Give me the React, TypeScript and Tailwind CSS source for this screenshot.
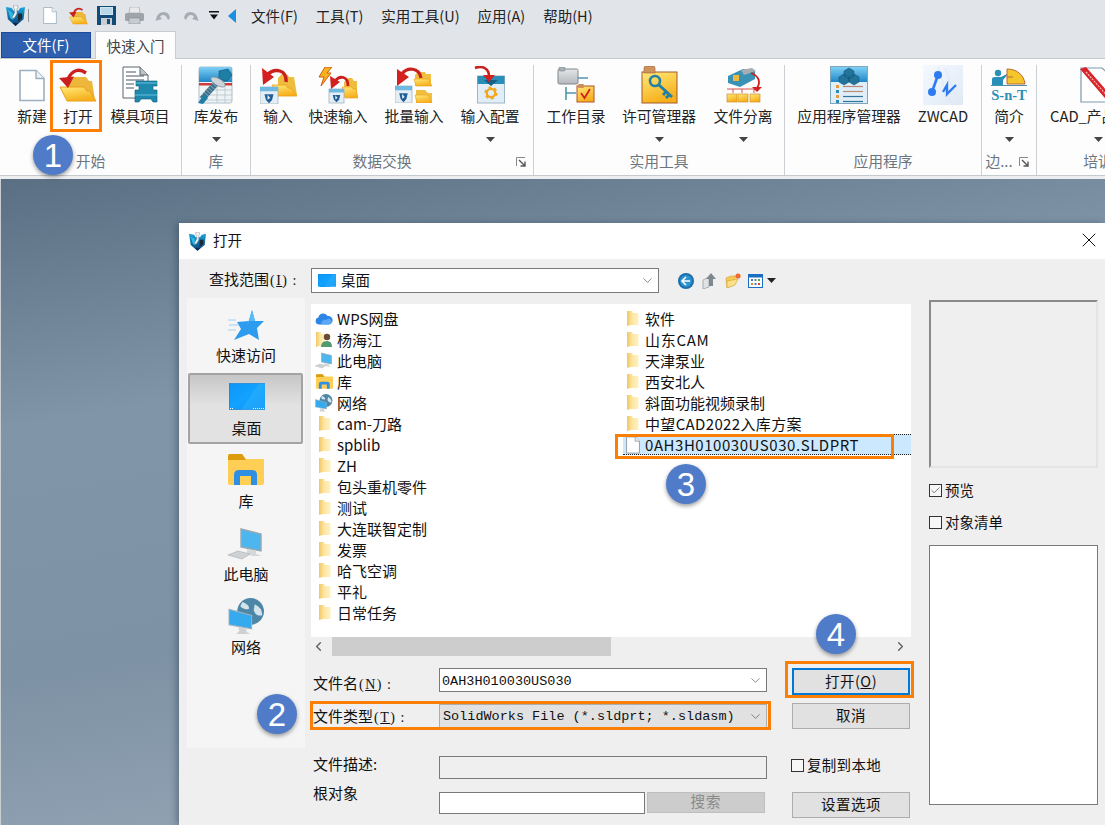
import React from "react";
import { ChevronDown, ChevronLeft, ChevronRight, Check, X } from "lucide-react";

const Defs = () => (
  <svg className="absolute w-0 h-0" aria-hidden="true">
    <defs>
      <linearGradient id="gF" x1="0" y1="0" x2="0.4" y2="1"><stop offset="0" stopColor="#ffe97a" /><stop offset="1" stopColor="#f7b01c" /></linearGradient>
      <linearGradient id="gS" x1="0" y1="0" x2="1" y2="0"><stop offset="0" stopColor="#f2c564" /><stop offset="0.45" stopColor="#fde6a3" /><stop offset="1" stopColor="#fff1c4" /></linearGradient>
      <linearGradient id="gB" x1="0" y1="0" x2="1" y2="1"><stop offset="0" stopColor="#0d96f5" /><stop offset="0.5" stopColor="#12a2ff" /><stop offset="1" stopColor="#0a8cf0" /></linearGradient>
      <linearGradient id="gL" x1="0" y1="0" x2="0" y2="1"><stop offset="0" stopColor="#7fd0f5" /><stop offset="1" stopColor="#1f86c6" /></linearGradient>
      <linearGradient id="gShield" x1="0" y1="0" x2="0" y2="1"><stop offset="0" stopColor="#1aa5da" /><stop offset="1" stopColor="#0b3e74" /></linearGradient>
      <linearGradient id="gGrey" x1="0" y1="0" x2="0" y2="1"><stop offset="0" stopColor="#e4e6e8" /><stop offset="1" stopColor="#b4b8bc" /></linearGradient>
      <linearGradient id="gZ" x1="0" y1="0" x2="1" y2="1"><stop offset="0" stopColor="#f4f9ff" /><stop offset="1" stopColor="#dfe9f5" /></linearGradient>
    </defs>
  </svg>
);

const Logo = ({ s = 20 }: { s?: number }) => (
  <svg width={s} height={s + 2} viewBox="0 0 20 22">
    <path d="M0 2 L6 3 L8 6 L13 6 L15 3 L20 2 L18.5 15 L10 22 L2 15z" fill="url(#gShield)" />
    <path d="M2 5 L7 8 L7.5 16 L4.5 13.5z" fill="#2fb7e6" />
    <path d="M12.5 9 H17 V14 L12.5 17.5z" fill="#1a2a36" />
    <path d="M8 0 h4 l.7 3 l-1.2 1.2 v5 l-3 5 l-2.2 -1.2 l2.7 -5 v-4 l-1.2 -1z" fill="#eef1f3" stroke="#5b6670" strokeWidth=".4" />
    <path d="M7 19 L10 22 L13 19z" fill="#0a2a4c" />
  </svg>
);

const Doc = ({ w = 14, h = 17, stroke = "#9db0bf" }: { w?: number; h?: number; stroke?: string }) => (
  <svg width={w} height={h} viewBox="0 0 26 32">
    <path d="M1 1 H17 L25 9 V31 H1z" fill="#fff" stroke={stroke} strokeWidth="1.6" />
    <path d="M17 1 V9 H25" fill="#eef2f5" stroke={stroke} strokeWidth="1.4" />
  </svg>
);

const OpenFolder = ({ w = 38, h = 36 }: { w?: number; h?: number }) => (
  <svg width={w} height={h} viewBox="0 0 38 36">
    <path d="M8 15 L13 10 H27 L30 14 H33 L36 33 H10z" fill="#ecb73a" />
    <path d="M1 20 H25 L28 24 H31 L37 34 H8z" fill="url(#gF)" stroke="#ea9f18" strokeWidth="1" />
    <path d="M27 6 C20 1 13 3 9 12" fill="none" stroke="#c9201e" strokeWidth="3.4" />
    <path d="M0 11 L15 9.5 L9 21z" fill="#c9201e" />
  </svg>
);

const Win = ({ x, y, w = 18, h = 17 }: { x: number; y: number; w?: number; h?: number }) => (
  <g>
    <rect x={x} y={y} width={w} height={h} fill="#e6eef5" stroke="#9fb3c4" strokeWidth=".8" />
    <rect x={x} y={y} width={w} height={h * 0.25} fill="#6db9e3" />
    <path d={`M${x + w * 0.25} ${y + h * 0.42} h${w * 0.5} l-${w * 0.08} ${h * 0.35} l-${w * 0.17} ${h * 0.18} l-${w * 0.17} -${h * 0.18}z`} fill="#1f5f96" />
    <path d={`M${x + w * 0.42} ${y + h * 0.45} l${w * 0.15} ${h * 0.2} l-${w * 0.15} ${h * 0.1}z`} fill="#e8f0f6" />
  </g>
);

const Import = () => (
  <svg width="37" height="37" viewBox="0 0 37 37">
    <path d="M18 11 L22 7 H27 L29 10 H34 L37 28 H18z" fill="#efbd3e" />
    <path d="M12 18 H26 L28 21 H31 L37 29 H17z" fill="url(#gF)" stroke="#ea9f18" strokeWidth=".8" />
    <Win x={0} y={20} />
    <path d="M26 15 C27 3 15 0 7 8" fill="none" stroke="#c9201e" strokeWidth="3.4" />
    <path d="M2 1 L3 18 L14 10z" fill="#d4201f" />
  </svg>
);

const Bolt = ({ x = 0, y = 0 }: { x?: number; y?: number }) => (
  <path transform={`translate(${x} ${y})`} d="M7 0 H14 L9 6 L13 6 L3 19 L6 10 L1 10z" fill="#f7b21d" stroke="#d65a12" strokeWidth="1" />
);

const FastImport = () => (
  <svg width="40" height="37" viewBox="0 0 40 37">
    <Bolt x={0} y={0} />
    <path d="M26 15 L30 11 H34 L36 14 H39 V30 H26z" fill="#efbd3e" />
    <path d="M24 20 H34 L35 22 H38 L40 31 H27z" fill="url(#gF)" stroke="#ea9f18" strokeWidth=".6" />
    <Win x={11} y={22} w={15} h={14} />
    <path d="M30 19 C30 9 22 8 17 14" fill="none" stroke="#c9201e" strokeWidth="2.8" />
    <path d="M12 9 L13 22 L22 15z" fill="#d4201f" />
  </svg>
);

const BatchImport = () => (
  <svg width="38" height="36" viewBox="0 0 38 36">
    <path d="M20 8 L23 5 H30 L31 7 H36 V19 H20z" fill="#f0bf42" />
    <path d="M19 12 H33 L37 19 H21z" fill="url(#gF)" stroke="#ea9f18" strokeWidth=".6" />
    <path d="M21 23 H30 L33 26 H37 V36 H21z" fill="#f0bf42" />
    <path d="M20 28 H33 L37 36 H22z" fill="url(#gF)" stroke="#ea9f18" strokeWidth=".6" />
    <Win x={0} y={19} w={17} h={17} />
    <path d="M26 11 C24 0 12 0 7 7" fill="none" stroke="#c9201e" strokeWidth="3.2" />
    <path d="M2 2 L2 19 L14 10z" fill="#d4201f" />
  </svg>
);

const Gear = ({ cx, cy, r }: { cx: number; cy: number; r: number }) => (
  <g>
    <circle cx={cx} cy={cy} r={r} fill="none" stroke="#f2a71c" strokeWidth={r * 0.55} />
    <circle cx={cx} cy={cy} r={r * 1.35} fill="none" stroke="#f2a71c" strokeWidth={r * 0.45} strokeDasharray={`${r * 0.7} ${r * 0.7}`} />
  </g>
);

const ImportConfig = () => (
  <svg width="32" height="38" viewBox="0 0 32 38">
    <rect x="3.5" y="10" width="27" height="27" fill="#e2eef7" stroke="#9fb6c6" />
    <rect x="3.5" y="10" width="27" height="8" fill="#2a8fb8" />
    <path d="M10 14 H24 L17 20z" fill="#175f85" />
    <Gear cx={17} cy={27} r={4.2} />
    <path d="M1 2 C9 -1 15 3 15 10" fill="none" stroke="#c9201e" strokeWidth="2.6" />
    <path d="M9 9 H21 L15 16z" fill="#d4201f" />
  </svg>
);

const WorkDir = () => (
  <svg width="38" height="36" viewBox="0 0 38 36">
    <rect x="1" y="2" width="20" height="15" rx="1.5" fill="url(#gGrey)" stroke="#7d8790" />
    <rect x="2" y="0" width="6" height="4" rx="1" fill="#a9b0b6" stroke="#7d8790" strokeWidth=".6" />
    <path d="M21 11 H31" stroke="#4f94ad" strokeWidth="1.5" />
    <path d="M9 20 V33 M9 26 H19" stroke="#4f94ad" strokeWidth="1.6" />
    <rect x="20" y="19" width="17" height="16" fill="url(#gF)" stroke="#b0542a" />
    <rect x="21" y="17" width="6" height="4" rx="1" fill="#cf8f59" />
    <path d="M24 26 L27.5 31 L33 22" fill="none" stroke="#d21f1f" strokeWidth="1.8" />
  </svg>
);

const KeyFolder = () => (
  <svg width="37" height="38" viewBox="0 0 37 38">
    <rect x="1" y="6" width="35" height="31" fill="url(#gF)" stroke="#a35a30" />
    <path d="M3 7 V2 Q3 0 5 0 H12 Q14 0 14 2 V7z" fill="#cf935d" stroke="#a35a30" strokeWidth=".6" />
    <circle cx="14" cy="15" r="5" fill="none" stroke="#2380a5" strokeWidth="2.6" />
    <path d="M18 19 L31 31 M25 26 L22 29 M28 29 L25 32" stroke="#2380a5" strokeWidth="3" fill="none" />
  </svg>
);

const FileSplit = () => (
  <svg width="37" height="36" viewBox="0 0 37 36">
    <path d="M3 9 L18 2 L30 4 V12 L15 20 L3 16z" fill="#3a93b5" />
    <path d="M16 3 L27 1 L31 4 L19 8z" fill="#a6adb3" />
    <rect x="8" y="8" width="6" height="6" fill="#f0b93b" />
    <path d="M2 22 H30 M8 22 V26 M17 22 V26 M29 22 V26" stroke="#d65050" strokeWidth="1" fill="none" />
    <rect x="2" y="27" width="10" height="8" fill="url(#gF)" stroke="#c8861e" strokeWidth=".6" />
    <rect x="13" y="27" width="10" height="8" fill="url(#gF)" stroke="#c8861e" strokeWidth=".6" />
    <rect x="25" y="27" width="10" height="8" fill="url(#gF)" stroke="#c8861e" strokeWidth=".6" />
    <path d="M26 6 C34 9 36 15 32 21" fill="none" stroke="#c9201e" strokeWidth="1.8" />
    <path d="M27 20 H37 L32 25z" fill="#d4201f" />
  </svg>
);

const AppManager = () => (
  <svg width="38" height="38" viewBox="0 0 38 38">
    <rect x=".5" y=".5" width="37" height="37" fill="#dfeef8" stroke="#7ea6bc" />
    <rect x="1" y="1" width="36" height="15" fill="url(#gL)" />
    <path d="M9 11 L14 8 L19 11 V16 L14 19 L9 16z M19 11 L24 8 L29 11 V16 L24 19 L19 16z M14 5 L19 2 L24 5 V10 L19 13 L14 10z" fill="#22749b" stroke="#0e4f73" strokeWidth=".5" />
    {[19, 24, 29, 34].map((y, i) => (
      <g key={y}>
        <rect x="6" y={y} width="3" height="3" fill={i % 2 ? "#2b8ab8" : "#e89a3a"} />
        <path d={`M13 ${y + 1.5} H33`} stroke={i < 2 ? "#b98a7a" : "#35739a"} strokeWidth="1.2" />
      </g>
    ))}
  </svg>
);

const Zw = () => (
  <svg width="40" height="40" viewBox="0 0 40 40">
    <rect width="40" height="40" rx="1" fill="url(#gZ)" />
    <path d="M22 3 C26 15 32 28 36 38 M15 2 C20 18 24 30 28 38" stroke="#e1e8f2" strokeWidth="1" fill="none" />
    <path d="M15 10 L9 27" stroke="#2f7cf0" strokeWidth="2.6" />
    <circle cx="15" cy="10" r="4" fill="#2f7cf0" />
    <circle cx="9" cy="27" r="4" fill="#2f7cf0" />
    <path d="M20 27 L24 20 V29 L33 20" fill="none" stroke="#2f7cf0" strokeWidth="2.4" />
  </svg>
);

const Snt = () => (
  <svg width="36" height="34" viewBox="0 0 36 34">
    <circle cx="7" cy="5" r="3.2" fill="#2a8fb8" />
    <path d="M1 17 V11 Q1 9 4 9 H10 L18 5 L12 12 V17z" fill="#2a8fb8" />
    <path d="M16 16 V1 C26 1 33 7 34 16z" fill="#f5c52c" stroke="#b86a3a" />
    <path d="M16 9 L22 9" stroke="#b86a3a" />
    <path d="M0 17.5 H36" stroke="#4b8fab" strokeWidth="1" />
    <text x="18" y="32" textAnchor="middle" fontFamily="Liberation Serif, serif" fontWeight="700" fontSize="14.5" fill="#2a8fb8">S-n-T</text>
  </svg>
);

const Premium = () => (
  <svg width="36" height="36" viewBox="0 0 36 36">
    <path d="M1 1 H22 L32 10 V35 H1z" fill="#fff" stroke="#7d9aae" strokeWidth="1.2" />
    <path d="M0 2 L6 0 L34 32 V36 H29z" fill="#d8232a" />
    <path d="M6 5 L30 32" stroke="#f7b7b7" strokeWidth="1.2" strokeDasharray="2 1" />
  </svg>
);

const Mold = () => (
  <svg width="36" height="38" viewBox="0 0 36 38">
    <path d="M1 1 H18 L26 9 V32 H1z" fill="#fff" stroke="#59656e" />
    <path d="M18 1 V9 H26" fill="#bcc4ca" stroke="#59656e" />
    {[6, 10, 14, 18, 22].map((y, i) => <path key={y} d={`M4 ${y} H${i < 1 ? 14 : i < 3 ? 22 : 12}`} stroke="#59656e" strokeWidth="1.1" />)}
    <path d="M14 15 H35 V20 H31 V24 H35 V36 H31 L29 33 H19 L17 36 H13 V24 H17 V20 H14z" fill="#1f89ad" stroke="#0f5d7d" strokeWidth=".6" />
    <path d="M14 17 H35 M13 29 H35" stroke="#63c1dd" strokeWidth="1" />
  </svg>
);

const LibPub = () => (
  <svg width="38" height="40" viewBox="0 0 38 40">
    <rect x="2" y="2" width="33" height="36" rx="2" fill="#eef3f6" stroke="#aebfca" />
    <rect x="2" y="2" width="33" height="15" fill="url(#gL)" />
    <rect x="2" y="18" width="33" height="2.5" fill="#cf3b3b" />
    <path d="M8 25 H35 M8 30 H35 M8 35 H35 M20 21 V38 M28 21 V38" stroke="#b6c3cb" strokeWidth=".8" />
    <path d="M5 34 L22 15" stroke="#3b6f88" strokeWidth="6" />
    <path d="M5 34 L22 15" stroke="#7ea1b2" strokeWidth="6" strokeDasharray="1 2" />
    <path d="M22 6 L31 4 L35 10 L30 16 L22 14z" fill="#1e7ea5" stroke="#0f5472" strokeWidth=".6" />
    <ellipse cx="21" cy="17" rx="8" ry="3.5" transform="rotate(30 21 17)" fill="#ccd4d9" stroke="#7e8b93" strokeWidth=".7" />
    <path d="M1 38 L7 29 L11 33 L6 39z" fill="#1e7ea5" />
  </svg>
);

const SmallFolder = () => (
  <svg width="13" height="17" viewBox="0 0 13 17">
    <path d="M1 1 H6.5 V3 H12.5 V15 H5 L1 16z" fill="url(#gS)" />
  </svg>
);

const Cloud = () => (
  <svg width="18" height="13" viewBox="0 0 18 13">
    <path d="M4 12.5 A3.6 3.6 0 0 1 3.4 5.4 A5 5 0 0 1 12.6 4 A4.2 4.2 0 0 1 14 12.5z" fill="#2c86e8" />
    <path d="M6 12.5 Q7 7 11 8 Q14 5 16 8 Q18 11 14 12.5z" fill="#5aa8f5" />
  </svg>
);

const Person = () => (
  <svg width="18" height="17" viewBox="0 0 18 17">
    <path d="M1 1 H6 V3 H10 V15 H4 L1 16z" fill="url(#gS)" />
    <circle cx="12" cy="6" r="3.2" fill="#6b4b33" />
    <path d="M6 16 Q6 10 12 10 Q17 10 17 16z" fill="#4f9a6f" />
  </svg>
);

const Pc = ({ s = 18 }: { s?: number }) => (
  <svg width={s} height={s} viewBox="0 0 36 36">
    <path d="M13 2 L33 7 V24 L13 20z" fill="#4db6ef" stroke="#9aa7b0" strokeWidth="1.4" />
    <path d="M19 22 L28 24 V27 L34 29 L24 29 L19 26z" fill="#d4d8db" />
    <path d="M0 28 L10 24 L22 27 L14 32z" fill="#cfd2d4" stroke="#a9adb1" strokeWidth=".6" />
  </svg>
);

const Lib = ({ w = 17, h = 15 }: { w?: number; h?: number }) => (
  <svg width={w} height={h} viewBox="0 0 36 31">
    <path d="M0 2 Q0 0 2 0 H14 L18 5 H36 V29 Q36 31 34 31 H2 Q0 31 0 29z" fill="#ffcf55" />
    <path d="M0 2 Q0 0 2 0 H14 L18 6 H0z" fill="#dd9c0e" />
    <path d="M6 31 V21 Q6 16 11 16 H24 Q29 16 29 21 V31 H23 V22 H12 V31z" fill="#2f8fe3" />
  </svg>
);

const Net = ({ s = 18 }: { s?: number }) => (
  <svg width={s} height={s} viewBox="0 0 36 36">
    <circle cx="22" cy="13" r="13" fill="#4c87a8" />
    <path d="M14 4 Q22 7 20 11 Q14 11 12 8z M26 6 Q34 10 33 17 Q27 18 25 12z" fill="#d5e4ea" />
    <path d="M1 11 L23 17 V30 L1 26z" fill="#35aaef" stroke="#9fb1bc" strokeWidth="1" />
    <path d="M10 28 L18 30 V33 L22 35 H8 L11 32z" fill="#cdd1d4" />
  </svg>
);

const Star = () => (
  <svg width="36" height="32" viewBox="0 0 36 32">
    <path d="M24 0 L27 11 L36 11 L29 18 L31 30 L21 24 L6 30 L13 19 L9 12 L21 11z" fill="#2d9cef" />
    <path d="M24 0 L27 11 L21 11 L19 16z" fill="#57bbf7" />
    <path d="M0 10 H8 M1 15 H11 M0 20 H8" stroke="#9bd2f6" strokeWidth="1" />
  </svg>
);

const Desk = ({ w = 36, h = 26 }: { w?: number; h?: number }) => (
  <svg width={w} height={h} viewBox="0 0 36 26">
    <rect width="36" height="26" fill="url(#gB)" stroke="#0d78cf" strokeWidth=".6" />
    <path d="M12 26 L30 0 H36 V26z" fill="#2bb0ff" opacity=".55" />
    <path d="M1 25 H4 M24 25 H35" stroke="#fff" strokeWidth="1" strokeDasharray="1 1" />
  </svg>
);

const Caret = ({ color = "#444" }: { color?: string }) => (
  <svg width="9" height="5" viewBox="0 0 9 5"><path d="M0 0 H9 L4.5 5z" fill={color} /></svg>
);

const Launcher = () => (
  <svg width="10" height="10" viewBox="0 0 10 10">
    <path d="M.5 9 V.5 H9" fill="none" stroke="#888" />
    <path d="M3 3 L9 9 M9 4.5 V9 H4.5" fill="none" stroke="#555" strokeWidth="1.4" />
  </svg>
);

const RBtn = ({ w, label, icon, caret }: { w: string; label: string; icon: React.ReactNode; caret?: boolean }) => (
  <div className={`flex flex-col items-center shrink-0 ${w}`}>
    <div className="h-[40px] flex items-center justify-center">{icon}</div>
    <div className="h-[22px] leading-[22px] whitespace-nowrap text-[14.8px] text-[#222]">{label}</div>
    {caret && <div className="mt-[10px] h-[5px] flex"><Caret /></div>}
  </div>
);

const Group = ({ w, pl, label, launcher, children }: { w: string; pl: string; label: string; launcher?: boolean; children: React.ReactNode }) => (
  <div className={`relative shrink-0 flex flex-col border-r border-[#ccd0d4] ${w}`}>
    <div className={`h-[87px] flex ${pl}`}>{children}</div>
    <div className={`h-[22px] leading-[18px] text-center text-[14.8px] text-[#6c7680] whitespace-nowrap ${launcher ? "pr-[20px]" : ""}`}>{label}</div>
    {launcher && <div className="absolute right-[7px] bottom-[8px] flex"><Launcher /></div>}
  </div>
);

const leftFiles: [string, React.ReactNode][] = [
  ["WPS网盘", <Cloud />],
  ["杨海江", <Person />],
  ["此电脑", <Pc />],
  ["库", <Lib />],
  ["网络", <Net />],
  ["cam-刀路", <SmallFolder />],
  ["spblib", <SmallFolder />],
  ["ZH", <SmallFolder />],
  ["包头重机零件", <SmallFolder />],
  ["测试", <SmallFolder />],
  ["大连联智定制", <SmallFolder />],
  ["发票", <SmallFolder />],
  ["哈飞空调", <SmallFolder />],
  ["平礼", <SmallFolder />],
  ["日常任务", <SmallFolder />],
];
const rightFiles: [string, string][] = [
  ["软件", ""],
  ["山东CAM", "tracking-[0.7px]"],
  ["天津泵业", ""],
  ["西安北人", ""],
  ["斜面功能视频录制", ""],
  ["中望CAD2022入库方案", "tracking-[0.35px]"],
];

const Box = ({ checked }: { checked?: boolean }) => (
  <span className="w-[13px] h-[13px] border border-[#333] bg-[#f7f7f7] flex items-center justify-center shrink-0">
    {checked && <Check size={11} strokeWidth={1.8} color="#666" />}
  </span>
);

const Btn = ({ w, h, children, cls = "" }: { w: string; h: string; children: React.ReactNode; cls?: string }) => (
  <div className={`${w} ${h} shrink-0 flex items-center justify-center pb-[2px] bg-[#e1e1e1] text-[14.5px] tracking-[0.5px] text-[#111] ${cls || "border border-[#adadad]"}`}>{children}</div>
);

const Num = ({ n, cls }: { n: string; cls: string }) => (
  <div className={`absolute w-[40px] h-[40px] rounded-full bg-[#4f7bc8] text-white flex items-center justify-center text-[33px] leading-none font-['Liberation_Sans',sans-serif] shadow-[0_2px_4px_rgba(0,0,0,0.4)] ${cls}`}>{n}</div>
);

const Orange = ({ cls }: { cls: string }) => <div className={`absolute border-[3px] border-[#fb7e05] ${cls}`} />;

const Label = ({ w, children }: { w: string; children: React.ReactNode }) => (
  <div className={`${w} pl-[2px] text-[15px] leading-[20px] text-[#111] whitespace-nowrap shrink-0`}>{children}</div>
);

const K = ({ c }: { c: string }) => (
  <span className="font-['Liberation_Serif',serif] text-[14px] tracking-[1.5px] ml-[1px]">(<u>{c}</u>)<span className="ml-[4px]">:</span></span>
);

export default function App() {
  return (
    <div className="relative w-[1105px] h-[825px] overflow-hidden flex flex-col bg-[#e1e5e9] font-['Noto_Sans_CJK_SC','Noto_Sans',sans-serif]">
      <Defs />
      {/* quick access + menu */}
      <div className="h-[31px] shrink-0 flex items-center pl-[6px]">
        <Logo s={19} />
        <div className="ml-[3px] w-px h-[13px] bg-[#8f969c]" />
        <div className="ml-[14px] flex"><Doc /></div>
        <div className="ml-[12px] flex"><OpenFolder w={19} h={18} /></div>
        <svg className="ml-[9px]" width="19" height="19" viewBox="0 0 19 19">
          <path d="M0 0 H19 V19 H0z" fill="#124a78" />
          <rect x="3" y="1" width="13" height="8" fill="#cfe6f4" />
          <path d="M4 3 H15 M4 5 H15 M4 7 H15" stroke="#8fb9d4" strokeWidth=".7" />
          <rect x="4" y="12" width="11" height="7" fill="#c9cdd1" />
          <rect x="10" y="13" width="3" height="5" fill="#124a78" />
        </svg>
        <svg className="ml-[9px]" width="19" height="17" viewBox="0 0 19 17">
          <path d="M5 0 H14 L15 6 H4z" fill="#e8eaec" stroke="#9aa0a5" strokeWidth=".6" />
          <rect x="0" y="6" width="19" height="8" rx="1.5" fill="#9ea4a9" />
          <rect x="4" y="11" width="11" height="6" fill="#c7cbcf" stroke="#858b90" strokeWidth=".6" />
        </svg>
        <svg className="ml-[11px]" width="16" height="10" viewBox="0 0 16 10">
          <path d="M1 9 Q2 1 9 1 Q14 1 15 7 L13 9 Q11 4 8 4 Q6 4 5 6 L7 8 L0 10z" fill="#a6acb1" />
        </svg>
        <svg className="ml-[12px]" width="16" height="10" viewBox="0 0 16 10">
          <path d="M15 9 Q14 1 7 1 Q2 1 1 7 L3 9 Q5 4 8 4 Q10 4 11 6 L9 8 L16 10z" fill="#a6acb1" />
        </svg>
        <svg className="ml-[10px]" width="10" height="9" viewBox="0 0 10 9">
          <path d="M0 0 H10 V1.5 H0z M1 3.5 H9 L5 8.5z" fill="#111" />
        </svg>
        <svg className="ml-[9px]" width="8" height="14" viewBox="0 0 8 14"><path d="M8 0 V14 L0 7z" fill="#1a8fe0" /></svg>
        <div className="ml-[15px] flex gap-[18px] text-[14.5px] text-[#222]">
          {["文件(F)", "工具(T)", "实用工具(U)", "应用(A)", "帮助(H)"].map((m) => <span key={m} className="whitespace-nowrap leading-[20px]">{m}</span>)}
        </div>
      </div>
      {/* tabs */}
      <div className="h-[27px] shrink-0 flex items-end pl-[1px]">
        <div className="w-[90px] h-[26px] bg-[#2f60ad] border border-[#1c4a9c] text-white text-[14.5px] flex items-center justify-center">文件(F)</div>
        <div className="relative z-10 ml-[4px] -mb-px w-[81px] h-[28px] bg-[#fdfdfd] border border-b-0 border-[#c9cdd1] text-[#444] text-[14.5px] flex items-center justify-center">快速入门</div>
      </div>
      {/* ribbon */}
      <div className="h-[118px] shrink-0 bg-[#fdfdfd] border-y border-[#c6cacf] pt-[6px] flex overflow-hidden">
        <Group w="w-[182px]" pl="pl-[9px]" label="开始">
          <RBtn w="w-[46px]" label="新建" icon={<Doc w={26} h={33} />} />
          <RBtn w="w-[46px]" label="打开" icon={<OpenFolder />} />
          <RBtn w="w-[78px]" label="模具项目" icon={<Mold />} />
        </Group>
        <Group w="w-[69px]" pl="pl-0" label="库">
          <RBtn w="w-[68px]" label="库发布" icon={<LibPub />} caret />
        </Group>
        <Group w="w-[283px]" pl="pl-[2px]" label="数据交换" launcher>
          <RBtn w="w-[50px]" label="输入" icon={<Import />} />
          <RBtn w="w-[70px]" label="快速输入" icon={<FastImport />} />
          <RBtn w="w-[82px]" label="批量输入" icon={<BatchImport />} />
          <RBtn w="w-[70px]" label="输入配置" icon={<ImportConfig />} caret />
        </Group>
        <Group w="w-[251px]" pl="pl-0" label="实用工具">
          <RBtn w="w-[84px]" label="工作目录" icon={<WorkDir />} />
          <RBtn w="w-[82px]" label="许可管理器" icon={<KeyFolder />} caret />
          <RBtn w="w-[86px]" label="文件分离" icon={<FileSplit />} caret />
        </Group>
        <Group w="w-[197px]" pl="pl-0" label="应用程序">
          <RBtn w="w-[128px]" label="应用程序管理器" icon={<AppManager />} />
          <RBtn w="w-[60px]" label="ZWCAD" icon={<Zw />} />
        </Group>
        <Group w="w-[55px]" pl="pl-0" label="边..." launcher>
          <RBtn w="w-[54px]" label="简介" icon={<Snt />} caret />
        </Group>
        <div className="w-[122px] shrink-0 flex flex-col">
          <div className="h-[87px] flex">
            <RBtn w="w-[122px]" label="CAD_产品介绍" icon={<Premium />} caret />
          </div>
          <div className="h-[22px] leading-[18px] text-center text-[14.8px] text-[#6c7680] whitespace-nowrap">培训</div>
        </div>
      </div>
      <div className="h-[3px] shrink-0 bg-[#eceef0]" />
      {/* workspace */}
      <div className="flex-1 border-l border-[#c9ced3] pl-[178px] pt-[44px] bg-[linear-gradient(170deg,#5a6f83_0%,#8095a7_30%,#7e92a5_60%,#9fafbd_100%)]">
        {/* dialog window */}
        <div className="w-[926px] h-[602px] bg-[#efefef] flex flex-col shadow-[-3px_0_6px_rgba(50,70,90,0.45)]">
          <div className="h-[36px] shrink-0 bg-white flex items-center pl-[10px] pr-[4px]">
            <Logo s={17} />
            <span className="ml-[7px] -mt-[3px] text-[14.5px] text-[#111]">打开</span>
            <X className="ml-auto -mt-[2px]" size={24} strokeWidth={1} color="#111" />
          </div>
          <div className="mt-[9px] h-[25px] shrink-0 flex items-center pl-[30px]">
            <div className="w-[102px] pb-[2px] text-[15px] leading-[20px] text-[#111] whitespace-nowrap">查找范围<K c="I" /></div>
            <div className="w-[348px] h-[25px] border border-[#7a7a7a] bg-white flex items-center pl-[6px] pr-[3px]">
              <Desk w={18} h={13} />
              <span className="ml-[5px] pb-[2px] text-[14.5px] text-[#111]">桌面</span>
              <ChevronDown className="ml-auto" size={15} strokeWidth={1.1} color="#555" />
            </div>
            <svg className="ml-[19px]" width="16" height="16" viewBox="0 0 16 16">
              <circle cx="8" cy="8" r="8" fill="#1d6fa8" />
              <circle cx="8" cy="8" r="6" fill="#2f93cf" />
              <path d="M8 4 L4 8 L8 12 M4 8 H12" stroke="#fff" strokeWidth="1.6" fill="none" />
            </svg>
            <svg className="ml-[8px]" width="14" height="16" viewBox="0 0 14 16">
              <path d="M1 7 L7 4 V14 L1 16z" fill="#dfe3e6" stroke="#8f979d" strokeWidth=".7" />
              <path d="M9 0 L14 6 H11 V13 H7 V6 H4z" fill="#7e8890" />
            </svg>
            <svg className="ml-[9px]" width="16" height="15" viewBox="0 0 16 15">
              <path d="M1 5 L6 3 H10 V11 L2 15z" fill="#f5c95a" stroke="#d59e2a" strokeWidth=".6" />
              <path d="M2 8 L13 6 L10 12 L2 15z" fill="#fde08a" stroke="#d59e2a" strokeWidth=".6" />
              <circle cx="13" cy="3" r="2.6" fill="#ef6a2e" />
            </svg>
            <svg className="ml-[7px]" width="15" height="14" viewBox="0 0 15 14">
              <rect x=".5" y=".5" width="14" height="13" fill="#fff" stroke="#1b6fc2" />
              <rect x="1" y="1" width="13" height="2.5" fill="#1b6fc2" />
              <path d="M3 5h2v2H3z" fill="#4a7fc0" /><path d="M6.5 5h2v2h-2z" fill="#6a7f8c" /><path d="M10 5h2v2h-2z" fill="#4fa24f" />
              <path d="M3 9h2v2H3z" fill="#e08a2c" /><path d="M6.5 9h2v2h-2z" fill="#3f7fc9" /><path d="M10 9h2v2h-2z" fill="#d04a3a" />
            </svg>
            <div className="ml-[4px] flex"><Caret color="#222" /></div>
          </div>
          <div className="mt-[5px] flex">
            {/* places */}
            <div className="ml-[8px] w-[118px] h-[450px] shrink-0 bg-[#f5f5f5] flex flex-col items-center pt-[12px] text-[15px] text-[#111]">
              <Star />
              <div className="mt-[3px] leading-[20px]">快速访问</div>
              <div className="mt-[8px] ml-[-2px] pl-[3px] w-[115px] h-[71px] shrink-0 border-2 border-[#a3a3a3] rounded-[2px] bg-[linear-gradient(#c6c6c6,#e2e2e2_45%,#e2e2e2)] flex flex-col items-center pt-[8px]">
                <Desk w={36} h={27} />
                <div className="mt-[8px] leading-[20px]">桌面</div>
              </div>
              <div className="mt-[10px] flex"><Lib w={36} h={31} /></div>
              <div className="mt-[6px] leading-[20px]">库</div>
              <div className="mt-[16px] flex"><Pc s={36} /></div>
              <div className="mt-[1px] leading-[20px]">此电脑</div>
              <div className="mt-[14px] flex"><Net s={37} /></div>
              <div className="mt-[2px] leading-[20px]">网络</div>
            </div>
            {/* centre */}
            <div className="ml-[6px] mt-[6px] w-[600px] shrink-0">
              <div className="h-[333px] bg-white flex pt-[4px] text-[15px] text-[#111]">
                <div className="w-[312px] shrink-0">
                  {leftFiles.map(([t, ic]) => (
                    <div key={t} className="h-[21px] flex items-center">
                      <div className="w-[26px] shrink-0 flex justify-center">{ic}</div>
                      <span className="leading-[21px] whitespace-nowrap">{t}</span>
                    </div>
                  ))}
                </div>
                <div className="flex-1">
                  {rightFiles.map(([t, c]) => (
                    <div key={t} className="h-[21px] flex items-center pl-[2px]">
                      <div className="w-[20px] shrink-0 pl-[1px] flex"><SmallFolder /></div>
                      <span className={`leading-[21px] whitespace-nowrap ${c}`}>{t}</span>
                    </div>
                  ))}
                  <div className="h-[21px] flex items-center pl-[3px] bg-[#cce8ff] border-y border-dotted border-[#222]">
                    <div className="w-[19px] shrink-0 flex"><Doc w={14} h={18} stroke="#8d949a" /></div>
                    <span className="leading-[19px] whitespace-nowrap tracking-[0.55px]">0AH3H010030US030.SLDPRT</span>
                  </div>
                </div>
              </div>
              <div className="h-[19px] flex items-center">
                <div className="w-[21px] shrink-0 flex"><ChevronLeft size={15} strokeWidth={2.2} color="#606060" /></div>
                <div className="h-full w-[279px] bg-[#cdcdcd]" />
                <ChevronRight className="ml-auto mr-[3px]" size={15} strokeWidth={2.2} color="#606060" />
              </div>
              <div className="mt-[12px] h-[36px] flex">
                <Label w="w-[128px] pt-[5px]">文件名<K c="N" /></Label>
                <div className="w-[328px] h-[24px] bg-white border border-[#7a7a7a] flex items-center pl-[2px] pr-[3px] font-['Liberation_Mono',monospace] text-[13.5px] text-[#111]">
                  <span className="translate-y-[2px]">0AH3H010030US030</span>
                  <ChevronDown className="ml-auto" size={15} strokeWidth={1.1} color="#555" />
                </div>
                <Btn w="ml-[25px] w-[118px]" h="h-[27px]" cls="border-2 border-[#0078d7]">打开(<u>O</u>)</Btn>
              </div>
              <div className="h-[52px] flex">
                <Label w="w-[128px] pt-[2px]">文件类型<K c="T" /></Label>
                <div className="w-[328px] h-[24px] bg-[#e1e1e1] border border-[#adadad] flex items-center pl-[3px] pr-[3px] font-['Liberation_Mono',monospace] text-[13.5px] text-[#111]">
                  <span className="translate-y-px">SolidWorks File (*.sldprt; *.sldasm)</span>
                  <ChevronDown className="ml-auto" size={15} strokeWidth={1.1} color="#555" />
                </div>
                <Btn w="ml-[25px] -mt-px w-[118px]" h="h-[26px]">取消</Btn>
              </div>
              <div className="h-[36px] flex">
                <Label w="w-[128px] -mt-[2px]">文件描述:</Label>
                <div className="w-[328px] h-[23px] bg-[#efefef] border border-[#7a7a7a]" />
                <div className="ml-[24px] mt-[3px] h-[13px] flex items-center">
                  <Box />
                  <span className="ml-[3px] -translate-y-px text-[14.5px] tracking-[0.3px] text-[#111] whitespace-nowrap leading-[20px]">复制到本地</span>
                </div>
              </div>
              <div className="flex">
                <Label w="w-[128px] -mt-[9px]">根对象</Label>
                <div className="w-[206px] h-[22px] bg-white border border-[#7a7a7a]" />
                <div className="ml-[2px] w-[118px] h-[21px] pb-[3px] bg-[#cccccc] border border-[#bfbfbf] text-[#8a8a8a] text-[14.5px] tracking-[1px] flex items-center justify-center">搜索</div>
                <Btn w="ml-[27px] w-[118px]" h="h-[26px]">设置选项</Btn>
              </div>
            </div>
            {/* right */}
            <div className="ml-[18px] mt-[2px] w-[169px] shrink-0 text-[14.5px] text-[#111]">
              <div className="h-[168px] border-2 border-t-[#8a8a8a] border-l-[#8a8a8a] border-r-[#e4e4e4] border-b-[#e4e4e4] bg-[#efefef]" />
              <div className="mt-[16px] h-[13px] flex items-center">
                <Box checked />
                <span className="ml-[3px] -translate-y-px leading-[20px]">预览</span>
              </div>
              <div className="mt-[19px] h-[13px] flex items-center">
                <Box />
                <span className="ml-[3px] -translate-y-px leading-[20px]">对象清单</span>
              </div>
              <div className="mt-[16px] h-[260px] bg-white border border-[#7a7a7a]" />
            </div>
          </div>
        </div>
      </div>
      {/* annotations */}
      <Orange cls="left-[50px] top-[60px] w-[52px] h-[72px]" />
      <Orange cls="left-[615px] top-[434px] w-[279px] h-[25px]" />
      <Orange cls="left-[310px] top-[701px] w-[461px] h-[29px]" />
      <Orange cls="left-[785px] top-[661px] w-[129px] h-[37px]" />
      <Num n="1" cls="left-[33px] top-[135px]" />
      <Num n="2" cls="left-[257px] top-[694px]" />
      <Num n="3" cls="left-[666px] top-[464px]" />
      <Num n="4" cls="left-[816px] top-[614px]" />
    </div>
  );
}
